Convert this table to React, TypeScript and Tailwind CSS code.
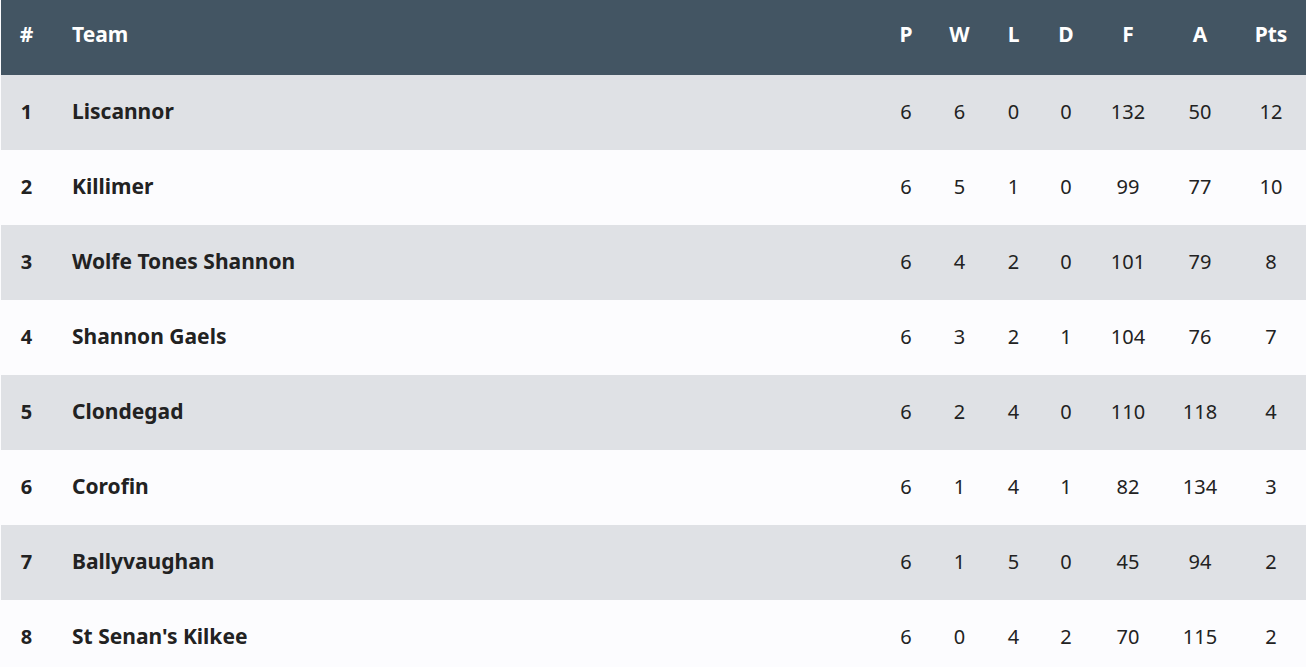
const rows: [number, string, number, number, number, number, number, number, number][] = [
  [1, "Liscannor", 6, 6, 0, 0, 132, 50, 12],
  [2, "Killimer", 6, 5, 1, 0, 99, 77, 10],
  [3, "Wolfe Tones Shannon", 6, 4, 2, 0, 101, 79, 8],
  [4, "Shannon Gaels", 6, 3, 2, 1, 104, 76, 7],
  [5, "Clondegad", 6, 2, 4, 0, 110, 118, 4],
  [6, "Corofin", 6, 1, 4, 1, 82, 134, 3],
  [7, "Ballyvaughan", 6, 1, 5, 0, 45, 94, 2],
  [8, "St Senan's Kilkee", 6, 0, 4, 2, 70, 115, 2],
];

const cols = "grid grid-cols-[51px_1fr_52px_55px_53px_52px_72px_72px_70px] items-center";

export default function App() {
  return (
    <div className="min-h-screen bg-[#fcfcfe] pl-px font-['Noto_Sans','Open_Sans',sans-serif] text-[20px] leading-none">
      <div className={`${cols} h-[75px] bg-[#435563] pb-[7px] text-[21px] font-bold text-white`}>
        <div className="text-center">#</div>
        <div className="pl-5">Team</div>
        {["P", "W", "L", "D", "F", "A", "Pts"].map((h) => (
          <div key={h} className="text-center">{h}</div>
        ))}
      </div>
      {rows.map((r, i) => (
        <div key={r[0]} className={`${cols} h-[75px] pb-[2px] text-[#222] ${i % 2 === 0 ? "bg-[#dfe1e5]" : "bg-[#fcfcfe]"}`}>
          <div className="text-center font-bold">{r[0]}</div>
          <div className="pl-5 text-[21px] font-bold">{r[1]}</div>
          {r.slice(2).map((v, j) => (
            <div key={j} className="text-center">{v}</div>
          ))}
        </div>
      ))}
    </div>
  );
}
